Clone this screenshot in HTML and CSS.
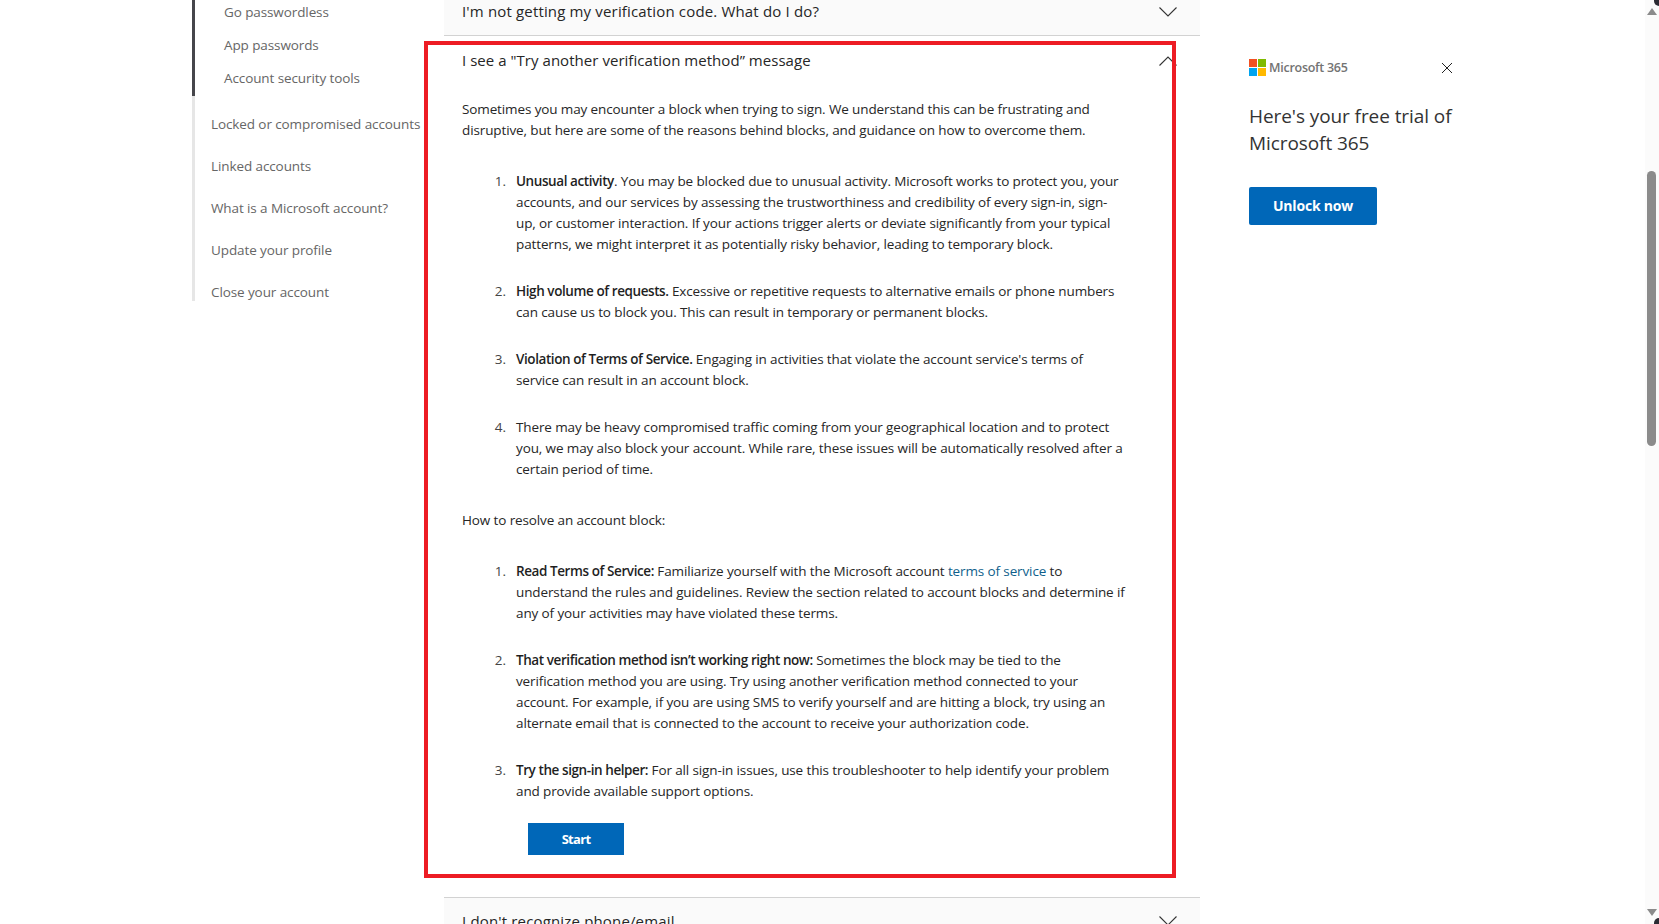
FILE: index.html
```html
<!DOCTYPE html>
<html lang="en">
<head>
<meta charset="utf-8">
<title>Microsoft account sign-in help</title>
<link rel="stylesheet" href="styles.css">
</head>
<body>
<div class="page">
  <nav class="sidebar">
    <ul class="sub-links">
      <li>Go passwordless</li>
      <li>App passwords</li>
      <li>Account security tools</li>
    </ul>
    <ul class="top-links">
      <li>Locked or compromised accounts</li>
      <li>Linked accounts</li>
      <li>What is a Microsoft account?</li>
      <li>Update your profile</li>
      <li>Close your account</li>
    </ul>
  </nav>

  <main class="accordion">
    <section class="item collapsed first">
      <header class="item-head">
        <h3>I'm not getting my verification code. What do I do?</h3>
        <svg class="chev" viewBox="0 0 18 10"><path d="M.5.5 9 9 17.500.5"/></svg>
      </header>
    </section>

    <section class="item open">
      <header class="item-head open-head">
        <h3>I see a "Try another verification method” message</h3>
        <svg class="chev" viewBox="0 0 18 10"><path d="M.5 9.500 9 1l8.500 8.500"/></svg>
      </header>
      <div class="panel">
        <p>Sometimes you may encounter a block when trying to sign. We understand this can be frustrating and<br>disruptive, but here are some of the reasons behind blocks, and guidance on how to overcome them.</p>
        <ol>
          <li><b>Unusual activity</b>. You may be blocked due to unusual activity. Microsoft works to protect you, your<br>accounts, and our services by assessing the trustworthiness and credibility of every sign-in, sign-<br>up, or customer interaction. If your actions trigger alerts or deviate significantly from your typical<br>patterns, we might interpret it as potentially risky behavior, leading to temporary block.</li>
          <li><b>High volume of requests.</b> Excessive or repetitive requests to alternative emails or phone numbers<br>can cause us to block you. This can result in temporary or permanent blocks.</li>
          <li><b>Violation of Terms of Service.</b> Engaging in activities that violate the account service's terms of<br>service can result in an account block.</li>
          <li>There may be heavy compromised traffic coming from your geographical location and to protect<br>you, we may also block your account. While rare, these issues will be automatically resolved after a<br>certain period of time.</li>
        </ol>
        <p>How to resolve an account block:</p>
        <ol>
          <li><b>Read Terms of Service:</b> Familiarize yourself with the Microsoft account <a href="#">terms of service</a> to<br>understand the rules and guidelines. Review the section related to account blocks and determine if<br>any of your activities may have violated these terms.</li>
          <li><b>That verification method isn’t working right now:</b> Sometimes the block may be tied to the<br>verification method you are using. Try using another verification method connected to your<br>account. For example, if you are using SMS to verify yourself and are hitting a block, try using an<br>alternate email that is connected to the account to receive your authorization code.</li>
          <li><b>Try the sign-in helper:</b> For all sign-in issues, use this troubleshooter to help identify your problem<br>and provide available support options.</li>
        </ol>
        <button class="start">Start</button>
      </div>
      <div class="frame"></div>
    </section>

    <section class="item collapsed last">
      <header class="item-head">
        <h3>I don't recognize phone/email</h3>
        <svg class="chev" viewBox="0 0 18 10"><path d="M.5.5 9 9 17.500.5"/></svg>
      </header>
    </section>
  </main>

  <aside class="promo">
    <div class="promo-top">
      <div class="brand">
        <svg class="ms-logo" viewBox="0 0 17 17">
          <rect width="8" height="8" fill="#f25022"/>
          <rect x="9" width="8" height="8" fill="#7fba00"/>
          <rect y="9" width="8" height="8" fill="#00a4ef"/>
          <rect x="9" y="9" width="8" height="8" fill="#ffb900"/>
        </svg>
        <span>Microsoft 365</span>
      </div>
      <svg class="close" viewBox="0 0 12 12"><path d="M1 1l10 10M11 1 1 11"/></svg>
    </div>
    <h2>Here's your free trial of Microsoft 365</h2>
    <button class="unlock">Unlock now</button>
  </aside>
</div>

<div class="scrollbar">
  <span class="arrow up"></span>
  <span class="thumb"></span>
  <span class="arrow down"></span>
</div>
</body>
</html>
```
FILE: styles.css
```css
* { box-sizing: border-box; }
html, body { margin: 0; height: 924px; overflow: hidden; background: #fff; }
body { font-family: "Open Sans", "Noto Sans", sans-serif; color: #262626; font-size: 13.500px; line-height: 21px; letter-spacing: -.12px; }

.page { display: flex; align-items: flex-start; margin-top: -11px; padding-left: 192px; }

/* sidebar */
.sidebar { width: 252px; flex: none; border-left: 3px solid #e6e6e6; height: 312px; color: #666; letter-spacing: -.1px; }
.sidebar ul { list-style: none; margin: 0; padding: 0; }
.sub-links { margin-left: -3px !important; border-left: 3px solid #46464b; padding: 7px 0 1px 29px !important; }
.sub-links li { padding: 6px 0; }
.top-links { padding: 0 0 0 16px !important; }
.top-links li { margin-top: 21px; white-space: nowrap; }
.top-links li:first-child { margin-top: 18px; }

/* accordion */
.accordion { width: 756px; flex: none; }
.item { position: relative; }
.item-head { display: flex; justify-content: space-between; align-items: center; height: 46px; padding: 0 23px 0 18px; }
.item-head h3 { margin: 0; font-size: 15px; font-weight: 400; line-height: 22px; color: #262626; letter-spacing: .04px; }
.collapsed .item-head { background: #fafafa; }
.collapsed h3 { letter-spacing: .16px !important; }
.first { border-bottom: 1px solid #d2d2d2; }
.first h3 { margin-top: -2px !important; }
.last { border-top: 1px solid #d2d2d2; margin-top: 42px; }
.open-head { height: 47px; }
.open-head .chev { margin-top: 2px; }
.chev { width: 18px; height: 10px; fill: none; stroke: #333; stroke-width: 1.100; flex: none; }
.panel { padding: 0 0 0 18px; }
.panel p { margin: 0 0 30px; white-space: nowrap; }
.panel p:first-child { margin-top: 16px; }
.panel ol { margin: 0 0 30px; padding: 0 0 0 54px; white-space: nowrap; }
.panel ol:last-of-type { margin-bottom: 0; }
.panel li { margin-bottom: 26px; }
.panel li:last-child { margin-bottom: 0; }
.panel li::marker { content: counter(list-item) ".\00a0\00a0\00a0"; color: #444; }
.panel b { font-weight: 600; color: #1f1f1f; letter-spacing: -.42px; }
.panel a { color: #0f5f8c; text-decoration: none; }
.start { display: block; margin: 21px 0 0 66px; width: 96px; height: 32px; border: 0; background: #0067b8; color: #fff; font: 700 13px/28px "Open Sans", sans-serif; padding: 0; letter-spacing: -.7px; }
.frame { position: absolute; left: -20px; top: 5px; width: 752px; height: 837px; border: 4px solid #ed1c24; pointer-events: none; }

/* promo */
.promo { width: 216px; margin-left: 49px; flex: none; padding-top: 70px; }
.promo-top { display: flex; justify-content: space-between; align-items: center; height: 17px; padding-right: 12px; }
.brand { display: flex; align-items: center; gap: 3px; font-size: 12.500px; font-weight: 600; color: #737373; letter-spacing: -.27px; }
.ms-logo { width: 17px; height: 17px; }
.close { width: 12px; height: 12px; fill: none; stroke: #222; stroke-width: 1; }
.promo h2 { margin: 27px 0 0; width: 216px; font-size: 19px; font-weight: 400; line-height: 27px; color: #333; letter-spacing: -.08px; }
.unlock { display: block; margin-top: 30px; width: 128px; height: 38px; border: 0; border-radius: 2px; background: #0067b8; color: #fff; font: 700 14px/38px "Open Sans", sans-serif; padding: 0; letter-spacing: -.2px; }

/* scrollbar */
.scrollbar { position: fixed; top: 0; right: 0; bottom: 0; width: 14px; background: #fbfbfb; }
.scrollbar::before, .scrollbar::after { content: ""; position: absolute; right: 0; width: 5px; height: 6px; background: #2b2b33; }
.scrollbar::before { top: 0; border-bottom-left-radius: 5px; }
.scrollbar::after { bottom: 0; border-top-left-radius: 5px; }
.thumb { position: absolute; left: 2px; top: 171px; width: 9px; height: 275px; border-radius: 5px; background: #8b8b8b; }
.arrow { position: absolute; left: 2px; width: 0; height: 0; border-left: 5px solid transparent; border-right: 5px solid transparent; }
.up { top: 8px; border-bottom: 7px solid #8b8b8b; }
.down { bottom: 8px; border-top: 7px solid #8b8b8b; }
```
